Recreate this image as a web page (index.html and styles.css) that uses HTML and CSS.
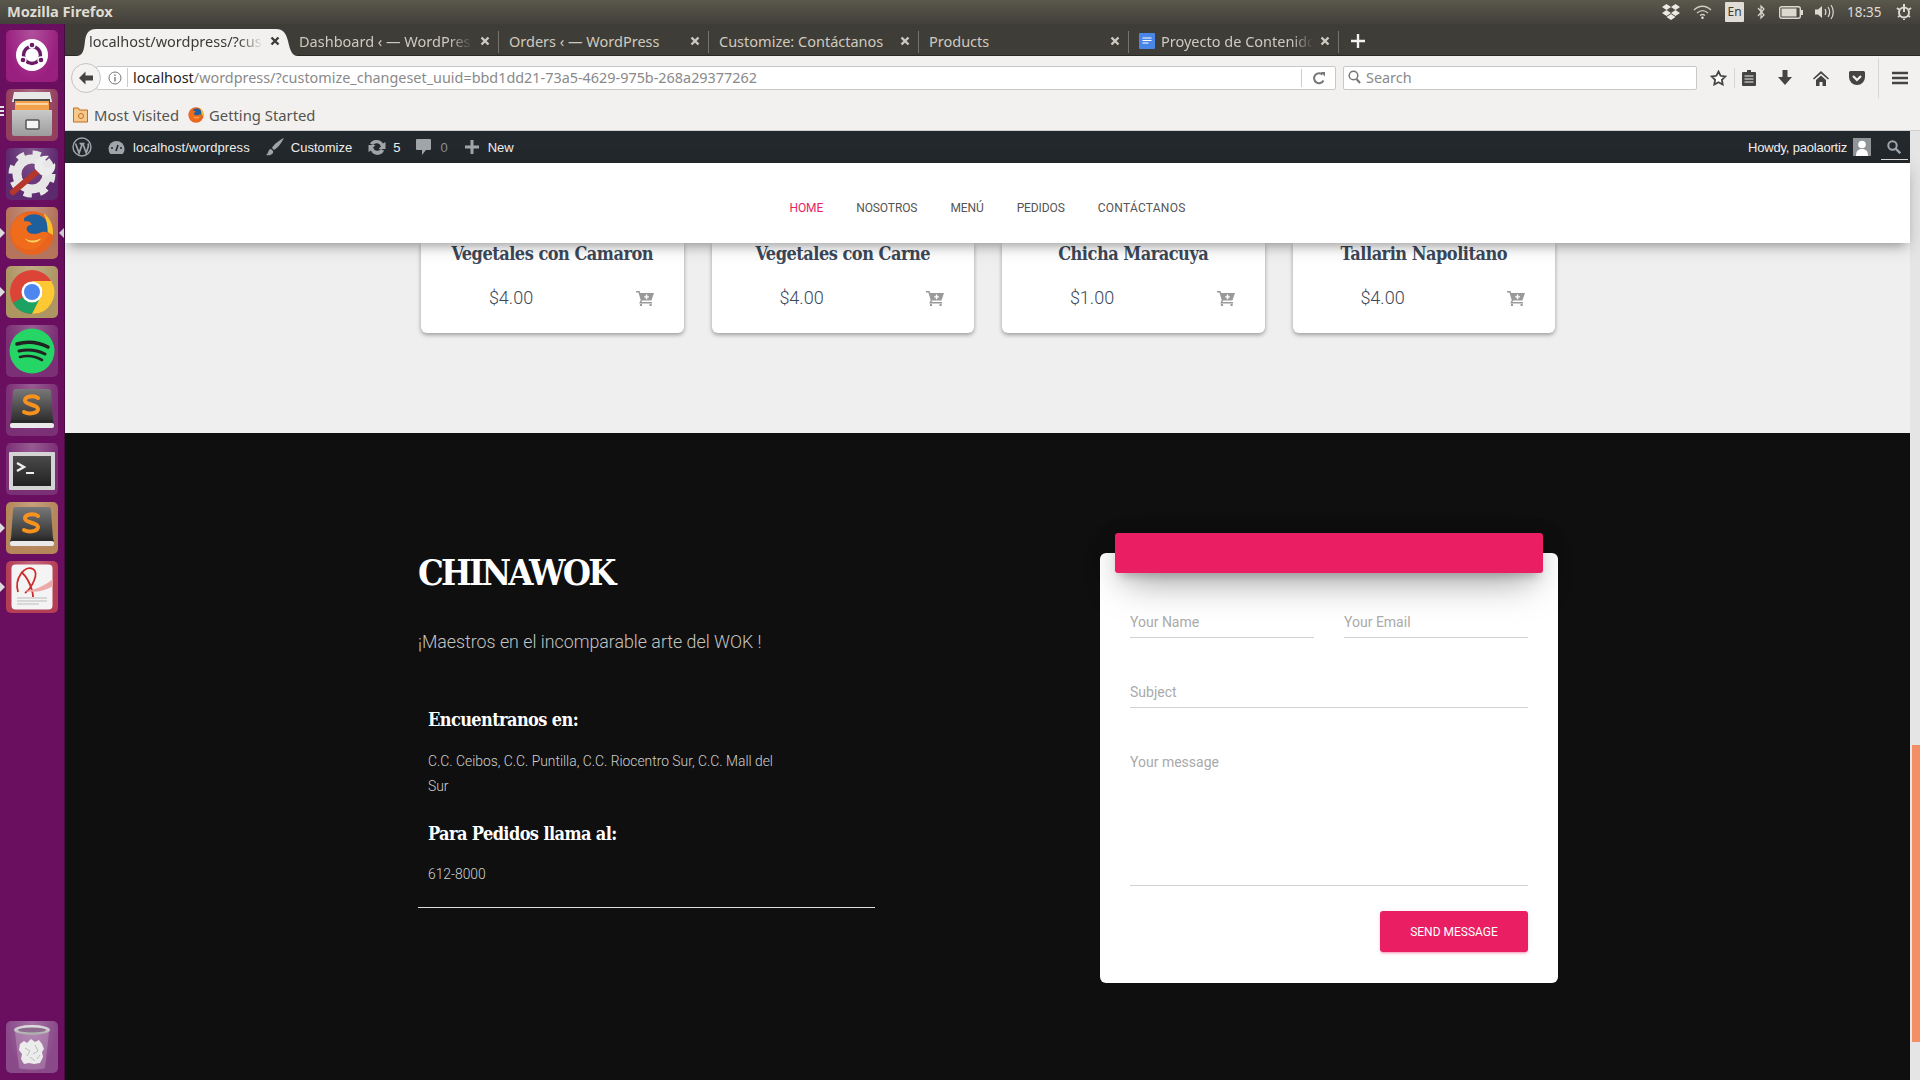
FILE: index.html
```html
<!DOCTYPE html>
<html lang="es">
  <head>
    <meta charset="UTF-8" />
    <title>Mozilla Firefox</title>
    <link rel="stylesheet" href="styles.css">
  </head>
  <body>
    <svg class="defs" width="0" height="0">
      <defs>
        <linearGradient id="gSub" x1="0" y1="0" x2="0" y2="1">
          <stop offset="0" stop-color="#787878" /><stop offset="1" stop-color="#2e2e2e" />
        </linearGradient>
        <linearGradient id="gGlass" x1="0" y1="0" x2="0" y2="1">
          <stop offset="0" stop-color="#e4e4e4" /><stop offset="1" stop-color="#a8a8a8" />
        </linearGradient>
        <linearGradient id="gDrawer" x1="0" y1="0" x2="0" y2="1">
          <stop offset="0" stop-color="#c9c9c9" /><stop offset="1" stop-color="#9c9c9c" />
        </linearGradient>
        <linearGradient id="gTerm" x1="0" y1="0" x2="0" y2="1">
          <stop offset="0" stop-color="#4a4a4a" /><stop offset="1" stop-color="#222" />
        </linearGradient>
        <symbol id="i-firefox" viewBox="0 0 44 44">
          <circle cx="22" cy="22" r="21" fill="#e8641f" />
          <circle cx="24" cy="18" r="14" fill="#1f5f9e" />
          <path d="M33 3c7 5 10 13 9 21l-5-3c0-6-1-12-4-18z" fill="#f7c331" />
          <path d="M2 22C2 12 8 5 16 4c-2 3-2 5-1 7 4-1 6 1 7 3-3 0-6 2-5 5 1 4 7 5 12 3 4-2 7-1 9 0-3 10-11 17-20 16C8 36 2 30 2 22z" fill="#ee6c1c" />
          <path d="M15 27c4 3 10 3 16 0-3 5-12 6-16 0z" fill="#ffd567" />
        </symbol>
        <symbol id="i-sublime" viewBox="0 0 52 52">
          <path d="M10 5h32a3 3 0 0 1 3 3l2 29H5l2-29a3 3 0 0 1 3-3z" fill="url(#gSub)" />
          <path d="M5 36h42l1 4H4z" fill="#2a2a2a" />
          <rect x="4" y="39" width="44" height="5" rx="2" fill="#e9e9e9" />
          <path d="M32 14c-4-3-13-2-13 2.500s13 4 13 8.500-9 5.500-14 3" fill="none" stroke="#f7921e" stroke-width="4" stroke-linecap="round" />
        </symbol>
        <symbol id="i-close" viewBox="0 0 10 10">
          <path d="M1.500 1.500l7 7M8.500 1.500l-7 7" stroke="currentColor" stroke-width="2.400" />
        </symbol>
        <symbol id="i-cart" viewBox="0 0 18 15">
          <path d="M0 0h3.400l.9 2H18l-2.600 7.400H6.200L5.400 11H16v1.400H3.200L4.700 9 2.400 1.400H0z" fill="#999" />
          <path d="M9.800 3.600h1.500v1.600h1.600v1.400h-1.600v1.600H9.800V6.600H8.200V5.200h1.600z" fill="#fff" />
          <circle cx="5" cy="14" r="1.200" fill="#999" />
          <circle cx="14.600" cy="14" r="1.200" fill="#999" />
        </symbol>
      </defs>
    </svg>

    <header class="topbar">
      <span class="topbar-title">Mozilla Firefox</span>
      <div class="tray">
        <svg class="tray-dropbox" width="18" height="16" viewBox="0 0 18 16"><path d="M4.500 0L9 3 4.500 6 0 3zM13.500 0L18 3l-4.500 3L9 3zM0 9l4.500-3L9 9l-4.500 3zM18 9l-4.500-3L9 9l4.500 3zM4.500 13L9 10l4.500 3L9 16z" fill="#ece9e2" /></svg>
        <svg class="tray-wifi" width="19" height="14" viewBox="0 0 19 14"><g fill="none" stroke="#cfccc4" stroke-width="1.300"><path d="M1 5c5-5 12-5 17 0" /><path d="M4 8c3.500-3 7.500-3 11 0" /><path d="M7 10.500c1.500-1.200 3.500-1.200 5 0" /></g><circle cx="9.500" cy="12.800" r="1.200" fill="#ece9e2" /></svg>
        <span class="tray-lang">En</span>
        <svg class="tray-bt" width="8" height="16" viewBox="0 0 8 16"><path d="M1 4l6 7-3 3V2l3 3-6 7" fill="none" stroke="#dcd9d1" stroke-width="1.200" /></svg>
        <svg class="tray-batt" width="24" height="13" viewBox="0 0 24 13"><rect x=".7" y=".7" width="20.600" height="11.600" rx="2" fill="none" stroke="#dcd9d1" stroke-width="1.400" /><rect x="2.500" y="2.500" width="15" height="8" fill="#dcd9d1" /><rect x="22" y="4" width="2" height="5" fill="#dcd9d1" /></svg>
        <svg class="tray-vol" width="19" height="16" viewBox="0 0 19 16"><path d="M0 5.500h3L7 2v12l-4-3.500H0z" fill="#dcd9d1" /><path d="M10 5c1.200 2 1.200 4 0 6M13 3c2 3 2 7 0 10M16 1c3 4 3 10 0 14" fill="none" stroke="#dcd9d1" stroke-width="1.200" /></svg>
        <span class="tray-clock">18:35</span>
        <svg class="tray-gear" width="16" height="16" viewBox="0 0 16 16"><g fill="none" stroke="#dcd9d1"><circle cx="8" cy="8.500" r="5" stroke-width="2" /><path d="M8 0v8" stroke-width="2" /><path d="M1 4l2 1.500M15 4l-2 1.500M2 13l1.500-1M14 13l-1.500-1M8 15v1" stroke-width="2" /></g></svg>
      </div>
    </header>

    <div class="desk">
      <aside class="launcher">
        <div class="tile tile-ubuntu">
          <svg width="52" height="52" viewBox="0 0 52 52">
            <circle cx="26" cy="25" r="16" fill="#fff" />
            <circle cx="26" cy="25" r="8.500" fill="none" stroke="#6b1a66" stroke-width="3.400" />
            <g stroke="#fff" stroke-width="1.400" fill="#6b1a66"><circle cx="26" cy="15" r="3" /><circle cx="17" cy="30" r="3" /><circle cx="35" cy="30" r="3" /></g>
          </svg>
        </div>
        <div class="tile tile-files pips">
          <svg width="52" height="52" viewBox="0 0 52 52">
            <path d="M8 3h36l2 10H6z" fill="#e8e8e8" />
            <path d="M8 10h36v4H8z" fill="#4a4a4a" />
            <path d="M9 12h34v9H9z" fill="#f2a24c" />
            <path d="M10 15h32" stroke="#fde3bb" stroke-width="1.500" />
            <path d="M6 21h40v24a2 2 0 0 1-2 2H8a2 2 0 0 1-2-2z" fill="url(#gDrawer)" />
            <rect x="20" y="31" width="13" height="9" rx="1" fill="#f4f4f4" stroke="#555" stroke-width="1.500" />
          </svg>
        </div>
        <div class="tile tile-settings">
          <svg width="52" height="52" viewBox="0 0 52 52">
            <circle cx="26" cy="26" r="15" fill="none" stroke="#e6e6e6" stroke-width="9" />
            <circle cx="26" cy="26" r="20.500" fill="none" stroke="#e6e6e6" stroke-width="6" stroke-dasharray="8 8.100" />
            <path d="M7 44l26-22" stroke="#b5362a" stroke-width="6" stroke-linecap="round" />
            <path d="M29 21c-2-7 4-15 14-13l-6 6 1 5 5 1 6-5c2 9-6 15-14 12z" fill="#ececec" />
          </svg>
        </div>
        <div class="tile tile-firefox run-left run-right"><svg width="46" height="46"><use href="#i-firefox" /></svg></div>
        <div class="tile tile-chrome run-left">
          <svg width="46" height="46" viewBox="0 0 46 46">
            <circle cx="23" cy="23" r="22" fill="#db4437" />
            <path d="M23 23L3.900 34A22 22 0 0 0 23 45l11-19z" fill="#1ca261" />
            <path d="M23 12h19.400A22 22 0 0 1 23 45l11-22z" fill="#fcc934" />
            <circle cx="23" cy="23" r="10.500" fill="#fff" />
            <circle cx="23" cy="23" r="8" fill="#4b87ee" />
          </svg>
        </div>
        <div class="tile tile-plain">
          <svg width="46" height="46" viewBox="0 0 46 46">
            <circle cx="23" cy="23" r="22.500" fill="#25d566" />
            <g fill="none" stroke="#222" stroke-linecap="round"><path d="M8 16c10-3 21-2 31 3" stroke-width="3.600" /><path d="M10 23c9-2 18-1 26 3" stroke-width="3" /><path d="M11 29c8-2 15-1 22 3" stroke-width="2.600" /></g>
          </svg>
        </div>
        <div class="tile tile-plain"><svg width="52" height="52"><use href="#i-sublime" /></svg></div>
        <div class="tile tile-plain">
          <svg class="term" width="46" height="38" viewBox="0 0 46 38">
            <rect width="46" height="38" rx="1" fill="#d4d4d4" />
            <rect x="4" y="4" width="38" height="30" fill="url(#gTerm)" />
            <path d="M8 11l7 4-7 4" fill="none" stroke="#eee" stroke-width="2.400" />
            <rect x="17" y="20" width="8" height="2" fill="#eee" />
          </svg>
        </div>
        <div class="tile tile-sublime run-left"><svg width="52" height="52"><use href="#i-sublime" /></svg></div>
        <div class="tile tile-red run-left">
          <svg width="42" height="46" viewBox="0 0 42 46">
            <rect x=".5" y=".5" width="41" height="45" rx="4" fill="#f4f4f4" />
            <path d="M7 28C3 14 14 1 22 5c7 4-2 20-8 24M10 8c6 4 12 17 12 25" fill="none" stroke="#cf2a2a" stroke-width="1.800" />
            <path d="M12 27c10 0 22-5 30-12v7c-8 5-18 7-30 5z" fill="#eda9a9" />
            <path d="M6 34h30M6 37h30M6 40h22" stroke="#bbb" />
          </svg>
        </div>
        <div class="tile tile-trash">
          <svg width="38" height="46" viewBox="0 0 38 46">
            <path d="M2 8l4 36c4 2 22 2 26 0l4-36z" fill="#fff" fill-opacity=".2" />
            <path d="M7 20l4-3 3 2 4-4 4 3 4-2 3 4 2 5-2 3 1 5-3 6-6 1-5-1-5 1-3-5 1-5-3-4z" fill="#ececec" />
            <path d="M12 24l5 3-3 5M22 21l3 6-5 3M17 33l5 4M27 31l-3 4" fill="none" stroke="#bdbdbd" />
            <ellipse cx="19" cy="6" rx="18" ry="5" fill="url(#gGlass)" />
            <ellipse cx="19" cy="6" rx="14" ry="2.600" fill="#8f6c8f" />
          </svg>
        </div>
      </aside>

      <main class="browser">
        <div class="tabstrip">
          <div class="tab tab-active">
            <svg class="tab-shape" width="222" height="28" viewBox="0 0 222 28"><path d="M0 28C7 28 8 22 9 13 10 5 13 1 20 1h180c7 0 10 4 12 12 2 9 4 15 10 15z" fill="#f2f1ef" /></svg>
            <span class="tab-label tab-fade">localhost/wordpress/?cus</span>
            <svg class="tab-close"><use href="#i-close" /></svg>
          </div>
          <div class="tab">
            <span class="tab-label tab-fade">Dashboard ‹ — WordPres</span>
            <svg class="tab-close"><use href="#i-close" /></svg>
          </div>
          <div class="tab">
            <span class="tab-label">Orders ‹ — WordPress</span>
            <svg class="tab-close"><use href="#i-close" /></svg>
          </div>
          <div class="tab">
            <span class="tab-label">Customize: Contáctanos</span>
            <svg class="tab-close"><use href="#i-close" /></svg>
          </div>
          <div class="tab">
            <span class="tab-label">Products</span>
            <svg class="tab-close"><use href="#i-close" /></svg>
          </div>
          <div class="tab">
            <svg class="tab-doc" width="16" height="16" viewBox="0 0 16 16"><rect width="16" height="16" rx="1" fill="#4a86e8" /><path d="M3.500 5h9M3.500 7.500h9M3.500 10h6" stroke="#fff" /></svg>
            <span class="tab-label tab-fade">Proyecto de Contenido</span>
            <svg class="tab-close"><use href="#i-close" /></svg>
          </div>
          <svg class="tab-new" width="14" height="14" viewBox="0 0 14 14"><path d="M7 0v14M0 7h14" stroke="#f2f1ef" stroke-width="2.400" /></svg>
        </div>

        <div class="toolbar">
          <div class="back">
            <svg width="16" height="14" viewBox="0 0 16 14"><path d="M7.500 0.500L1 7l6.500 6.500V9.500H15v-5H7.500z" fill="#444" /></svg>
          </div>
          <div class="urlbar">
            <svg class="url-info" width="14" height="14" viewBox="0 0 14 14"><circle cx="7" cy="7" r="6" fill="none" stroke="#777" /><path d="M7 6v4.500M7 3.500v1.500" stroke="#777" stroke-width="1.400" /></svg>
            <span class="url-text"><b>localhost</b>/wordpress/?customize_changeset_uuid=bbd1dd21-73a5-4629-975b-268a29377262</span>
            <span class="url-sep"></span>
            <svg class="url-reload" width="14" height="14" viewBox="0 0 14 14"><path d="M11.500 9.500A5 5 0 1 1 10.500 3.500" fill="none" stroke="#777" stroke-width="2" /><path d="M8.500 1h4.500v4.500z" fill="#777" /></svg>
          </div>
          <div class="searchbar">
            <svg width="13" height="14" viewBox="0 0 13 14"><circle cx="5.500" cy="5.500" r="4.300" fill="none" stroke="#777" stroke-width="1.500" /><path d="M8.500 9l3.500 4" stroke="#777" stroke-width="2" /></svg>
            <span>Search</span>
          </div>
          <div class="tools">
            <svg class="tool-star" width="17" height="16" viewBox="0 0 17 16"><path d="M8.500 1.500l2.100 4.300 4.700.7-3.400 3.300.8 4.700-4.200-2.200-4.200 2.200.8-4.700L1.700 6.500l4.700-.7z" fill="#fff" stroke="#444" stroke-width="1.800" /></svg>
            <span class="tool-sep"></span>
            <svg class="tool-list" width="14" height="16" viewBox="0 0 14 16"><path d="M5 0h4v2h4a1 1 0 0 1 1 1v12a1 1 0 0 1-1 1H1a1 1 0 0 1-1-1V3a1 1 0 0 1 1-1h4z" fill="#444" /><path d="M2.500 6h9M2.500 9h9M2.500 12h9" stroke="#f2f1ef" /></svg>
            <svg class="tool-down" width="14" height="16" viewBox="0 0 14 16"><path d="M4.500 0h5v7H14l-7 8-7-8h4.500z" fill="#444" /></svg>
            <svg class="tool-home" width="16" height="15" viewBox="0 0 16 15"><path d="M8 0l8 7.500-1 1L8 2.500 1 8.500l-1-1z" fill="#444" /><path d="M3 9l5-4.500L13 9v6H9.500v-4h-3v4H3z" fill="#444" /></svg>
            <svg class="tool-pocket" width="16" height="14" viewBox="0 0 16 14"><path d="M1.500 0h13A1.500 1.500 0 0 1 16 1.500V6A8 8 0 0 1 0 6V1.500A1.500 1.500 0 0 1 1.500 0z" fill="#444" /><path d="M4 5l4 4 4-4" fill="none" stroke="#f2f1ef" stroke-width="2.200" /></svg>
            <span class="tool-sep tool-sep-tall"></span>
            <svg class="tool-menu" width="16" height="14" viewBox="0 0 16 14"><path d="M0 2h16M0 7h16M0 12h16" stroke="#444" stroke-width="2.600" /></svg>
          </div>
        </div>

        <div class="bookmarks">
          <svg class="bm-folder" width="15" height="16" viewBox="0 0 15 16"><path d="M.5 1h5l1 2h8v12H.5z" fill="#f4c98b" stroke="#c8691c" /><circle cx="8" cy="9" r="2.500" fill="none" stroke="#c8691c" /></svg>
          <span class="bm-one">Most Visited</span>
          <svg class="bm-fox" width="16" height="16"><use href="#i-firefox" /></svg>
          <span>Getting Started</span>
        </div>

        <div class="viewport">
          <div class="page">
            <div class="adminbar">
              <svg class="ab-wp" width="20" height="20" viewBox="0 0 20 20"><circle cx="10" cy="10" r="9" fill="none" stroke="#a0a5aa" stroke-width="1.400" /><path d="M3.500 6.500l3.600 9.500 2.600-7.500-.8-2M7.500 6.500h5M10.800 6.500l3.400 9.500 2-6c.5-1.500.3-2.500-.2-3.500" fill="none" stroke="#a0a5aa" stroke-width="1.700" /></svg>
              <svg class="ab-dash" width="17" height="15" viewBox="0 0 17 15"><path d="M8.500 1a8 8 0 0 1 8 8c0 2-.7 3.700-1.900 5H2.400A8 8 0 0 1 .5 9a8 8 0 0 1 8-8z" fill="#a0a5aa" /><path d="M8 11l2-6" stroke="#23282d" stroke-width="1.600" /><circle cx="4" cy="8" r="1" fill="#23282d" /><circle cx="13" cy="8" r="1" fill="#23282d" /></svg>
              <span class="ab-site">localhost/wordpress</span>
              <svg class="ab-brush" width="18" height="18" viewBox="0 0 18 18"><path d="M18 0C14 2 8 6 6 10l2 2c4-2 8-8 10-12zM5 11c-3 0-2 4-5 6 4 1 8-1 7-4z" fill="#a0a5aa" /></svg>
              <span class="ab-cust">Customize</span>
              <svg class="ab-upd" width="18" height="16" viewBox="0 0 18 16"><path d="M9 1a7 7 0 0 1 6 3.500L17.500 3v7h-7l2.400-2.400A4.500 4.500 0 0 0 5 6L2 4.500A7 7 0 0 1 9 1zM.5 6h7L5.100 8.400A4.500 4.500 0 0 0 13 10l3 1.500A7 7 0 0 1 3 11.500L.5 13z" fill="#a0a5aa" /></svg>
              <span class="ab-num">5</span>
              <svg class="ab-com" width="15" height="16" viewBox="0 0 15 16"><path d="M1 0h13a1 1 0 0 1 1 1v9a1 1 0 0 1-1 1h-4l-4 5v-5H1a1 1 0 0 1-1-1V1a1 1 0 0 1 1-1z" fill="#a0a5aa" /></svg>
              <span class="ab-zero">0</span>
              <svg class="ab-plus" width="14" height="14" viewBox="0 0 14 14"><path d="M7 0v14M0 7h14" stroke="#a0a5aa" stroke-width="3" /></svg>
              <span class="ab-new">New</span>
              <span class="ab-howdy">Howdy, paolaortiz</span>
              <svg class="ab-avatar" width="18" height="18" viewBox="0 0 18 18"><rect width="18" height="18" fill="#8f9599" /><circle cx="9" cy="6.500" r="3.800" fill="#fff" /><path d="M3 18c0-5 2-7 6-7s6 2 6 7z" fill="#fff" /></svg>
              <div class="ab-search">
                <svg width="14" height="14" viewBox="0 0 14 14"><circle cx="5.500" cy="5.500" r="4.200" fill="none" stroke="#a0a5aa" stroke-width="2" /><path d="M8.500 8.500l4.800 4.800" stroke="#a0a5aa" stroke-width="2.400" /></svg>
              </div>
            </div>

            <nav class="sitenav">
              <a class="sitenav-on">Home</a>
              <a>Nosotros</a>
              <a>Menú</a>
              <a>Pedidos</a>
              <a>Contáctanos</a>
            </nav>

            <section class="products">
              <article class="card">
                <h4>Vegetales con Camaron</h4>
                <div class="card-foot"><span class="price">$4.00</span><svg class="cart" width="18" height="15"><use href="#i-cart" /></svg></div>
              </article>
              <article class="card">
                <h4>Vegetales con Carne</h4>
                <div class="card-foot"><span class="price">$4.00</span><svg class="cart" width="18" height="15"><use href="#i-cart" /></svg></div>
              </article>
              <article class="card">
                <h4>Chicha Maracuya</h4>
                <div class="card-foot"><span class="price">$1.00</span><svg class="cart" width="18" height="15"><use href="#i-cart" /></svg></div>
              </article>
              <article class="card">
                <h4>Tallarin Napolitano</h4>
                <div class="card-foot"><span class="price">$4.00</span><svg class="cart" width="18" height="15"><use href="#i-cart" /></svg></div>
              </article>
            </section>

            <section class="contact">
              <div class="info">
                <h2>CHINAWOK</h2>
                <p class="tagline">¡Maestros en el incomparable arte del WOK !</p>
                <div class="info-box">
                  <h4>Encuentranos en:</h4>
                  <p>C.C. Ceibos, C.C. Puntilla, C.C. Riocentro Sur, C.C. Mall del Sur</p>
                  <h4>Para Pedidos llama al:</h4>
                  <p>612-8000</p>
                </div>
                <hr>
              </div>
              <form class="form-card">
                <div class="form-head"></div>
                <div class="form-row">
                  <input type="text" placeholder="Your Name" />
                  <input type="text" placeholder="Your Email" />
                </div>
                <input class="form-subject" type="text" placeholder="Subject" />
                <textarea placeholder="Your message"></textarea>
                <div class="form-foot"><button type="button">Send Message</button></div>
              </form>
            </section>
          </div>
          <div class="track"><div class="thumb"></div></div>
        </div>
      </main>
    </div>
  </body>
</html>
```

FILE: styles.css
```css
* {
  margin: 0;
  padding: 0;
  box-sizing: border-box;
}
body {
  width: 1920px;
  height: 1080px;
  overflow: hidden;
  display: flex;
  flex-flow: column;
  font-family: "Roboto", "Liberation Sans", sans-serif;
  background-color: #0f0f0f;
}
.defs {
  position: absolute;
}
svg {
  display: block;
  flex-shrink: 0;
}

/* ubuntu top panel */
.topbar {
  height: 24px;
  display: flex;
  align-items: center;
  justify-content: space-between;
  padding: 0 8px 0 7px;
  background: linear-gradient(#5a574c, #42403a);
}
.topbar-title {
  padding-bottom: 2px;
  font: bold 14.6px "Noto Sans", sans-serif;
  color: #dfdbd2;
}
.tray {
  display: flex;
  align-items: center;
  color: #dfdbd2;
}
.tray-wifi { margin-left: 13px; }
.tray-lang {
  width: 19px;
  height: 20px;
  margin-left: 13px;
  background-color: #e0ddd6;
  border-radius: 1px;
  color: #3c3b37;
  font: 12px/20px "Noto Sans", sans-serif;
  text-align: center;
}
.tray-bt { margin-left: 13px; }
.tray-batt { margin-left: 14px; }
.tray-vol { margin-left: 12px; }
.tray-clock {
  width: 37px;
  margin-left: 13px;
  font: 13.5px "Noto Sans", sans-serif;
}
.tray-gear { margin-left: 12px; }

.desk {
  flex: 1;
  display: flex;
  min-height: 0;
}

/* launcher */
.launcher {
  width: 65px;
  flex-shrink: 0;
  display: flex;
  flex-flow: column;
  gap: 7px;
  padding: 6px 7px 7px 6px;
  background-color: #6a0f5f;
  border-right: 1px solid #470b41;
}
.tile {
  position: relative;
  width: 52px;
  height: 52px;
  flex-shrink: 0;
  display: flex;
  align-items: center;
  justify-content: center;
  border-radius: 5px;
  background-image: radial-gradient(ellipse at 50% 0, rgba(255, 255, 255, 0.22), rgba(255, 255, 255, 0) 70%);
}
.tile-ubuntu { background-color: #9a2080; }
.tile-files { background-color: #93405e; }
.tile-settings { background-color: #5f2a70; }
.tile-firefox { background-color: #b5745c; }
.tile-chrome { background-color: #ae9663; }
.tile-plain { background-color: #7b2f75; }
.tile-sublime { background-color: #b5865a; }
.tile-red { background-color: #b43e55; }
.tile-trash {
  margin-top: auto;
  background-color: #8a4a8a;
}
.term {
  margin-top: 4px;
}
/* running indicators */
.run-left::before,
.run-right::after {
  content: "";
  position: absolute;
  top: 21px;
  border: 5px solid transparent;
}
.run-left::before {
  left: -6px;
  border-left-color: #dcdcdc;
}
.run-right::after {
  right: -6px;
  border-right-color: #dcdcdc;
}
.pips::before {
  content: "";
  position: absolute;
  left: -6px;
  top: 17px;
  width: 4px;
  height: 2px;
  background-color: #e2e2e2;
  box-shadow: 0 4px #e2e2e2, 0 8px #e2e2e2;
}

.browser {
  flex: 1;
  min-width: 0;
  display: flex;
  flex-flow: column;
}

/* tabs */
.tabstrip {
  height: 32px;
  display: flex;
  align-items: center;
  padding-left: 14px;
  background-color: #3f3d38;
  border-bottom: 1px solid #2a2926;
  font: 14.5px "Noto Sans", sans-serif;
}
.tab {
  position: relative;
  width: 210px;
  height: 31px;
  display: flex;
  align-items: center;
  padding: 0 9px 0 10px;
  color: #cfcabf;
}
.tab::after {
  content: "";
  position: absolute;
  right: 0;
  top: 7px;
  width: 1px;
  height: 22px;
  background-color: #77746b;
}
.tab-active {
  color: #3c3b37;
}
.tab-active::after {
  display: none;
}
.tab-shape {
  position: absolute;
  left: -3px;
  bottom: -1px;
}
.tab-label {
  position: relative;
  flex: 1;
  padding-top: 2px;
  overflow: hidden;
  white-space: nowrap;
}
.tab-fade {
  -webkit-mask-image: linear-gradient(to right, #000 85%, transparent 99%);
  mask-image: linear-gradient(to right, #000 85%, transparent 99%);
}
.tab-close {
  position: relative;
  width: 10px;
  height: 10px;
  margin: 2px 0 0 5px;
}
.tab-doc {
  margin: 2px 6px 0 0;
}
.tab-new {
  margin: 2px 0 0 12px;
}

/* nav toolbar */
.toolbar {
  height: 44px;
  display: flex;
  align-items: center;
  padding-left: 6px;
  background-color: #f2f1ef;
}
.back {
  position: relative;
  z-index: 1;
  width: 30px;
  height: 30px;
  display: flex;
  align-items: center;
  justify-content: center;
  background-color: #f4f3f1;
  border: 1px solid #c4c4c4;
  border-radius: 50%;
}
.urlbar {
  width: 1240px;
  height: 24px;
  margin-left: -5px;
  display: flex;
  align-items: center;
  padding: 0 0 2px 11px;
  background-color: #fff;
  border: 1px solid #c8c8c8;
  border-radius: 2px;
  font: 14.4px "Noto Sans", sans-serif;
  color: #8a8a8a;
}
.url-info {
  margin-top: 2px;
}
.url-text {
  flex: 1;
  margin-left: 5px;
  padding-left: 5px;
  border-left: 1px solid #ccc;
  white-space: nowrap;
}
.url-text b {
  font-weight: normal;
  color: #222;
}
.url-sep {
  width: 1px;
  height: 18px;
  margin: 2px 10px 0 0;
  background-color: #ccc;
}
.url-reload {
  margin: 2px 9px 0 0;
}
.searchbar {
  width: 354px;
  height: 24px;
  margin-left: 7px;
  display: flex;
  align-items: center;
  gap: 5px;
  padding: 0 0 2px 4px;
  background-color: #fff;
  border: 1px solid #c8c8c8;
  border-radius: 2px;
  font: 14.4px "Noto Sans", sans-serif;
  color: #8a8a8a;
}
.tools {
  flex: 1;
  display: flex;
  align-items: center;
  padding-left: 13px;
}
.tool-sep {
  width: 1px;
  height: 20px;
  margin-left: 7px;
  background-color: #d8d7d4;
}
.tool-sep-tall {
  height: 40px;
  margin-left: 13px;
}
.tool-list { margin-left: 7px; }
.tool-down { margin-left: 22px; }
.tool-home { margin-left: 21px; }
.tool-pocket { margin-left: 20px; }
.tool-menu { margin-left: 13px; }

/* bookmarks */
.bookmarks {
  height: 31px;
  display: flex;
  align-items: center;
  padding: 0 0 1px 8px;
  background-color: #f2f1ef;
  border-bottom: 1px solid #cfcfcf;
  font: 14.8px "Noto Sans", sans-serif;
  color: #55544f;
}
.bm-one {
  margin-left: 6px;
}
.bm-fox {
  margin: 0 5px 0 9px;
}

.viewport {
  flex: 1;
  min-height: 0;
  display: flex;
}
.page {
  flex: 1;
  min-width: 0;
  display: flex;
  flex-flow: column;
}
.track {
  width: 10px;
  padding: 614px 0 0 2px;
  background-color: #e5e5e5;
}
.thumb {
  height: 297px;
  background-color: #f38e65;
}

/* wp admin bar */
.adminbar {
  height: 32px;
  flex-shrink: 0;
  display: flex;
  align-items: center;
  padding-left: 7px;
  background-color: #23282d;
  font: 13px "Liberation Sans", Arial, sans-serif;
  color: #eee;
}
.ab-dash { margin-left: 16px; }
.ab-site {
  margin-left: 8px;
  letter-spacing: 0.1px;
}
.ab-brush { margin-left: 16px; }
.ab-cust { margin-left: 7px; }
.ab-upd { margin-left: 16px; }
.ab-num { margin-left: 7px; }
.ab-com { margin-left: 16px; }
.ab-zero {
  margin-left: 9px;
  color: #8b9094;
}
.ab-plus { margin-left: 17px; }
.ab-new { margin-left: 9px; }
.ab-howdy {
  margin-left: auto;
  letter-spacing: -0.2px;
}
.ab-avatar { margin-left: 6px; }
.ab-search {
  width: 27px;
  height: 26px;
  margin: 0 2px 0 10px;
  padding: 6px 0 0 6px;
  border-bottom: 1px solid #ddd;
}

/* site header */
.sitenav {
  position: relative;
  z-index: 2;
  height: 80px;
  flex-shrink: 0;
  display: flex;
  align-items: center;
  justify-content: center;
  gap: 33px;
  padding-top: 9px;
  background-color: #fff;
  box-shadow: 0 4px 18px 0 rgba(0, 0, 0, 0.14), 0 7px 10px -5px rgba(0, 0, 0, 0.3);
  font-size: 12px;
  letter-spacing: -0.1px;
  text-transform: uppercase;
  color: #555;
}
.sitenav a:last-child {
  letter-spacing: 0.25px;
}
.sitenav-on {
  color: #e91e63;
}

/* products */
.products {
  height: 190px;
  flex-shrink: 0;
  overflow: hidden;
  display: flex;
  gap: 28px;
  padding-left: 356px;
  background-color: #efefef;
}
.card {
  width: 262.5px;
  height: 90px;
  padding-top: 1px;
  background-color: #fff;
  border-radius: 0 0 6px 6px;
  box-shadow: 0 2px 4px rgba(0, 0, 0, 0.35);
}
.card h4 {
  height: 20px;
  font: bold 18px/20px "DejaVu Serif", serif;
  font-stretch: condensed;
  letter-spacing: -0.5px;
  color: #3c4858;
  text-align: center;
}
.card-foot {
  display: flex;
  align-items: center;
  margin-top: 24px;
  padding: 0 30px 0 15px;
}
.price {
  width: 150px;
  font-weight: 300;
  font-size: 18px;
  line-height: 20px;
  color: #3c4858;
  text-align: center;
}
.cart {
  margin-left: auto;
}

/* contact */
.contact {
  flex: 1;
  display: flex;
  align-items: flex-start;
  padding: 120px 0 0 353px;
  background-color: #0f0f0f;
}
.info {
  width: 457px;
  margin-right: 225px;
}
.info h2 {
  margin-top: -3px;
  font: bold 36px/44px "DejaVu Serif", serif;
  font-stretch: condensed;
  letter-spacing: -2.7px;
  color: #fff;
}
.tagline {
  margin-top: 36px;
  font-weight: 300;
  font-size: 17.8px;
  line-height: 24px;
  color: #c4c4c4;
}
.info-box {
  width: 350px;
  margin: 54px 0 0 10px;
  color: #fff;
}
.info-box h4 {
  font: bold 18px/24px "DejaVu Serif", serif;
  font-stretch: condensed;
  letter-spacing: -0.6px;
}
.info-box p {
  margin: 17px 0 23px;
  font-weight: 300;
  font-size: 13.85px;
  line-height: 25px;
  color: #d0d0d0;
}
.info-box p:last-child {
  margin: 16px 0 0;
}
.info hr {
  margin-top: 20px;
  border: none;
  border-top: 1px solid #ddd;
}

.form-card {
  width: 458px;
  height: 430px;
  padding: 0 30px;
  background-color: #fff;
  border-radius: 6px;
}
.form-head {
  height: 40px;
  margin: -20px -15px 0;
  background-color: #e91e63;
  border-radius: 3px;
  box-shadow: 0 16px 38px -12px rgba(0, 0, 0, 0.56), 0 4px 25px 0 rgba(0, 0, 0, 0.12), 0 8px 10px -5px rgba(0, 0, 0, 0.2);
}
.form-row {
  display: flex;
  gap: 30px;
  margin-top: 29px;
}
.form-row input {
  flex: 1;
  min-width: 0;
}
input,
textarea {
  display: block;
  width: 100%;
  height: 36px;
  padding-top: 4px;
  border: none;
  border-bottom: 1px solid #d2d2d2;
  outline: none;
  background: none;
  font: 14px "Roboto", sans-serif;
}
input::placeholder,
textarea::placeholder {
  color: #aaa;
  opacity: 1;
}
.form-subject {
  margin-top: 34px;
}
textarea {
  height: 144px;
  margin-top: 34px;
  padding-top: 12px;
  resize: none;
}
.form-foot {
  display: flex;
  justify-content: flex-end;
  margin-top: 25px;
}
.form-foot button {
  width: 148px;
  height: 41px;
  border: none;
  border-radius: 3px;
  background-color: #e91e63;
  box-shadow: 0 2px 2px 0 rgba(233, 30, 99, 0.14), 0 3px 1px -2px rgba(233, 30, 99, 0.2), 0 1px 5px 0 rgba(233, 30, 99, 0.12);
  font: 12px "Roboto", sans-serif;
  text-transform: uppercase;
  color: #fff;
}
```
